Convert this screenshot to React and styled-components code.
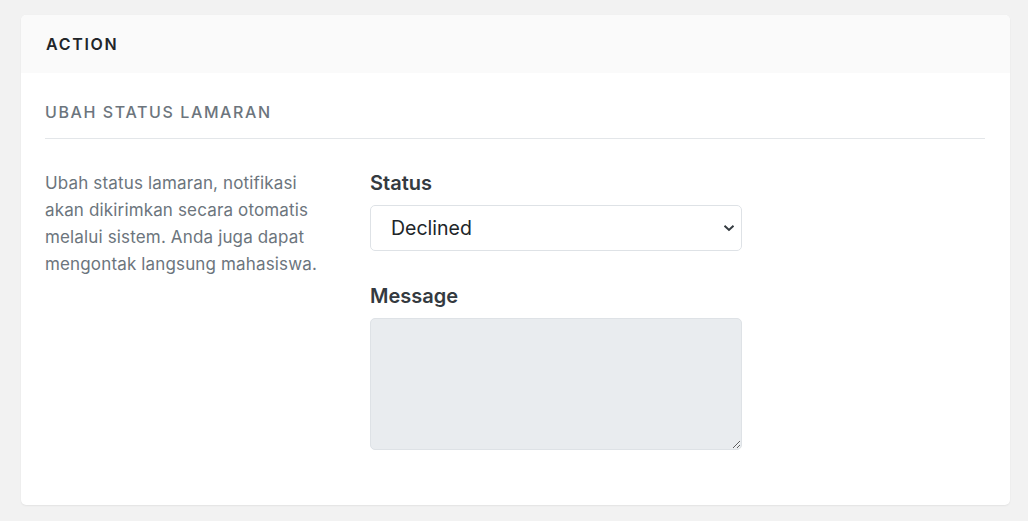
import React from 'react';
import styled, { createGlobalStyle } from 'styled-components';

const GlobalStyle = createGlobalStyle`
  html, body {
    margin: 0;
    padding: 0;
    background: #f2f2f2;
    font-family: Inter, "Noto Sans", sans-serif;
    color: #212529;
  }
  * {
    box-sizing: border-box;
  }
`;

const Page = styled.div`
  padding: 15px 18px 16px 21px;
`;

const Card = styled.div`
  background: #fff;
  border-radius: 5px;
  box-shadow: 0 1px 2px rgba(0, 0, 0, 0.06), 0 0 1px rgba(0, 0, 0, 0.05);
  overflow: hidden;
`;

const CardHeader = styled.div`
  background: #fafafa;
  height: 58px;
  padding: 0 25px;
  display: flex;
  align-items: center;
`;

const HeaderTitle = styled.h5`
  margin: 0;
  font-size: 16px;
  font-weight: 600;
  letter-spacing: 1.7px;
  color: #212529;
`;

const CardBody = styled.div`
  padding: 27px 25px 55px 24px;
`;

const SectionTitle = styled.h6`
  margin: 0;
  font-size: 16px;
  font-weight: 500;
  line-height: 24px;
  letter-spacing: 1.6px;
  color: #6c757d;
  padding-bottom: 14px;
  border-bottom: 1px solid #e3e6e9;
`;

const Row = styled.div`
  display: grid;
  grid-template-columns: 325px 372px;
  margin-top: 31px;
`;

const Description = styled.p`
  margin: 0;
  font-size: 17px;
  line-height: 27px;
  letter-spacing: 0.15px;
  color: #6c757d;
  padding-right: 40px;
`;

const FormColumn = styled.div`
  display: flex;
  flex-direction: column;
`;

const Group = styled.div`
  margin-top: ${(p) => (p.$first ? '1px' : '33px')};
`;

const Label = styled.label`
  display: block;
  font-size: 20px;
  font-weight: 600;
  line-height: 24px;
  color: #343a40;
  margin-bottom: 10px;
`;

const SelectWrap = styled.div`
  position: relative;
`;

const Select = styled.select`
  appearance: none;
  width: 100%;
  height: 46px;
  padding: 0 32px 0 20px;
  font-family: inherit;
  font-size: 19.5px;
  color: #212529;
  background: #fff;
  border: 1px solid #dee2e6;
  border-radius: 5px;
  outline: none;
`;

const Chevron = styled.svg`
  position: absolute;
  right: 7px;
  top: 50%;
  transform: translateY(-50%);
  pointer-events: none;
`;

const TextArea = styled.textarea`
  display: block;
  width: 100%;
  height: 132px;
  padding: 10px 16px;
  font-family: inherit;
  font-size: 18px;
  background: #e9ecef;
  border: 1px solid #dee2e6;
  border-radius: 5px;
  outline: none;
  resize: both;
`;

export default function App() {
  return (
    <>
      <GlobalStyle />
      <Page>
        <Card>
          <CardHeader>
            <HeaderTitle>ACTION</HeaderTitle>
          </CardHeader>
          <CardBody>
            <SectionTitle>UBAH STATUS LAMARAN</SectionTitle>
            <Row>
              <Description>
                Ubah status lamaran, notifikasi akan dikirimkan secara otomatis
                melalui sistem. Anda juga dapat mengontak langsung mahasiswa.
              </Description>
              <FormColumn>
                <Group $first>
                  <Label>Status</Label>
                  <SelectWrap>
                    <Select defaultValue="declined">
                      <option value="pending">Pending</option>
                      <option value="accepted">Accepted</option>
                      <option value="declined">Declined</option>
                    </Select>
                    <Chevron width="12" height="8" viewBox="0 0 12 8">
                      <path
                        d="M1.5 1.8 L6 6 L10.5 1.8"
                        fill="none"
                        stroke="#343a40"
                        strokeWidth="2"
                      />
                    </Chevron>
                  </SelectWrap>
                </Group>
                <Group>
                  <Label>Message</Label>
                  <TextArea readOnly />
                </Group>
              </FormColumn>
            </Row>
          </CardBody>
        </Card>
      </Page>
    </>
  );
}
